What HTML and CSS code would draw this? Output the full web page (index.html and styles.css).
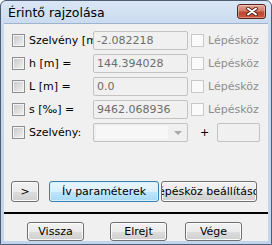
FILE: index.html
```html
<!DOCTYPE html>
<html lang="hu">
<head>
    <meta charset="UTF-8">
    <title>Érintő rajzolása</title>
    <link rel="stylesheet" href="styles.css">
</head>
<body>
    <div class="window">
        <div class="titlebar">
            <span class="title">Érintő rajzolása</span>
            <div class="close">
                <svg width="14" height="9" viewBox="0 0 14 9">
                    <path d="M3 1.5 L11 7.5 M11 1.5 L3 7.5" stroke="#4a1d14" stroke-width="3.6" stroke-linecap="round"/>
                    <path d="M3 1.5 L11 7.5 M11 1.5 L3 7.5" stroke="#fff" stroke-width="2" stroke-linecap="round"/>
                </svg>
            </div>
        </div>
        <div class="client">
            <div class="fields">
                <div class="lbl"><span class="cb"></span>Szelvény [m]:</div>
                <div class="input">-2.082218</div>
                <div class="step"><span class="cb cb-off"></span>Lépésköz</div>

                <div class="lbl"><span class="cb"></span>h [m] =</div>
                <div class="input">144.394028</div>
                <div class="step"><span class="cb cb-off"></span>Lépésköz</div>

                <div class="lbl"><span class="cb"></span>L [m] =</div>
                <div class="input">0.0</div>
                <div class="step"><span class="cb cb-off"></span>Lépésköz</div>

                <div class="lbl"><span class="cb"></span>s [‰] =</div>
                <div class="input">9462.068936</div>
                <div class="step"><span class="cb cb-off"></span>Lépésköz</div>

                <div class="lbl"><span class="cb"></span>Szelvény:</div>
                <div class="combo"><span class="combo-field"></span><span class="arrow"></span></div>
                <div class="extra"><span class="plus">+</span><div class="input small"></div></div>
            </div>

            <div class="actions">
                <div class="btn btn-more">&gt;</div>
                <div class="btn btn-default btn-arc">Ív paraméterek</div>
                <div class="btn btn-steps"><span>Lépésköz beállítások</span></div>
            </div>

            <div class="sep"></div>

            <div class="footer">
                <div class="btn btn-foot" id="vissza">Vissza</div>
                <div class="btn btn-foot" id="elrejt">Elrejt</div>
                <div class="btn btn-foot" id="vege">Vége</div>
            </div>
        </div>
    </div>
</body>
</html>
```

FILE: styles.css
```css
body { margin: 0; font-family: "DejaVu Sans", sans-serif; font-size: 11px; }

.window {
    width: 272px;
    height: 245px;
    box-sizing: border-box;
    border: 1px solid #4d5d72;
    border-radius: 6px 6px 0 0;
    background: linear-gradient(#d9e6f5, #c6d8ee 30px, #c2d5ec);
    padding: 0 3px 3px;
    display: flex;
    flex-direction: column;
}

.titlebar {
    height: 22px;
    flex: none;
    display: flex;
    align-items: center;
    justify-content: space-between;
}
.title {
    font-size: 12.5px;
    color: #000;
    margin-left: 4px;
}
.close {
    width: 27px;
    height: 13px;
    margin-right: 2px;
    margin-top: -2px;
    border: 1px solid #5b241a;
    border-radius: 3px;
    background: linear-gradient(#e5a595, #d27a68 45%, #bf4a34 55%, #c9533b);
    box-shadow: inset 0 0 0 1px rgba(255,255,255,0.35);
    display: flex;
    align-items: center;
    justify-content: center;
}

.client {
    flex: 1;
    background: #f0f0f0;
    border: 1px solid #9fb3cc;
    border-width: 1px 0 0;
    padding: 7px 0 0 8px;
}

.fields {
    display: grid;
    grid-template-columns: 81px 95px auto;
    grid-auto-rows: 19px;
    row-gap: 4px;
}
.lbl, .step {
    display: flex;
    align-items: center;
    white-space: nowrap;
    overflow: hidden;
}
.lbl { color: #000; }
.step { color: #8d8d8d; padding-left: 3px; }

.cb {
    width: 11px;
    height: 11px;
    border: 1px solid #8e8f8f;
    background: linear-gradient(135deg, #c6c6c6, #f3f3f3);
    box-shadow: inset 0 0 0 1px #f4f4f4;
    margin-right: 4px;
    flex: none;
}
.cb-off {
    border-color: #c9c9c9;
    background: #fafafa;
    box-shadow: none;
}

.input {
    box-sizing: border-box;
    border: 1px solid #c3c3c3;
    border-radius: 2px;
    background: #f0f0f0;
    color: #6d6d6d;
    padding-left: 3px;
    display: flex;
    align-items: center;
}
.input.small { width: 43px; height: 19px; margin-left: 8px; }

.combo {
    box-sizing: border-box;
    border: 1px solid #c3c3c3;
    border-radius: 2px;
    background: #f0f0f0;
    display: flex;
    padding: 2px;
}
.combo-field { flex: 1; background: #f7f7f7; }
.arrow {
    width: 0;
    height: 0;
    border-left: 4px solid transparent;
    border-right: 4px solid transparent;
    border-top: 4px solid #a8a8a8;
    align-self: center;
    margin: 0 3px 0 6px;
}
.extra { display: flex; align-items: center; }
.plus { margin-left: 12px; color: #000; }

.actions {
    display: flex;
    margin: 39px 0 0 -1px;
}
.btn {
    box-sizing: border-box;
    height: 21px;
    border: 1px solid #707070;
    border-radius: 3px;
    background: linear-gradient(#f2f2f2, #ebebeb 50%, #dddddd 51%, #cfcfcf);
    box-shadow: inset 0 0 0 1px #fbfbfb;
    display: flex;
    align-items: center;
    justify-content: center;
    white-space: nowrap;
    overflow: hidden;
    color: #000;
}
.btn-more { width: 28px; }
.btn-arc { width: 110px; margin-left: 10px; }
.btn-default {
    border-color: #3c7fb1;
    background: linear-gradient(#eaf6fd, #d9f0fc 50%, #bee6fd 51%, #a7d9f5);
    box-shadow: inset 0 0 0 1px #d4f1ff;
}
.btn-steps { width: 96px; margin-left: 2px; }

.sep {
    height: 2px;
    background: #000;
    margin: 10px 0 0 -8px;
}

.footer {
    display: flex;
    margin-top: 8px;
}
.btn-foot { width: 57px; height: 19px; }
#vissza { margin-left: 15px; }
#elrejt { margin-left: 26px; }
#vege { margin-left: 18px; }
```
